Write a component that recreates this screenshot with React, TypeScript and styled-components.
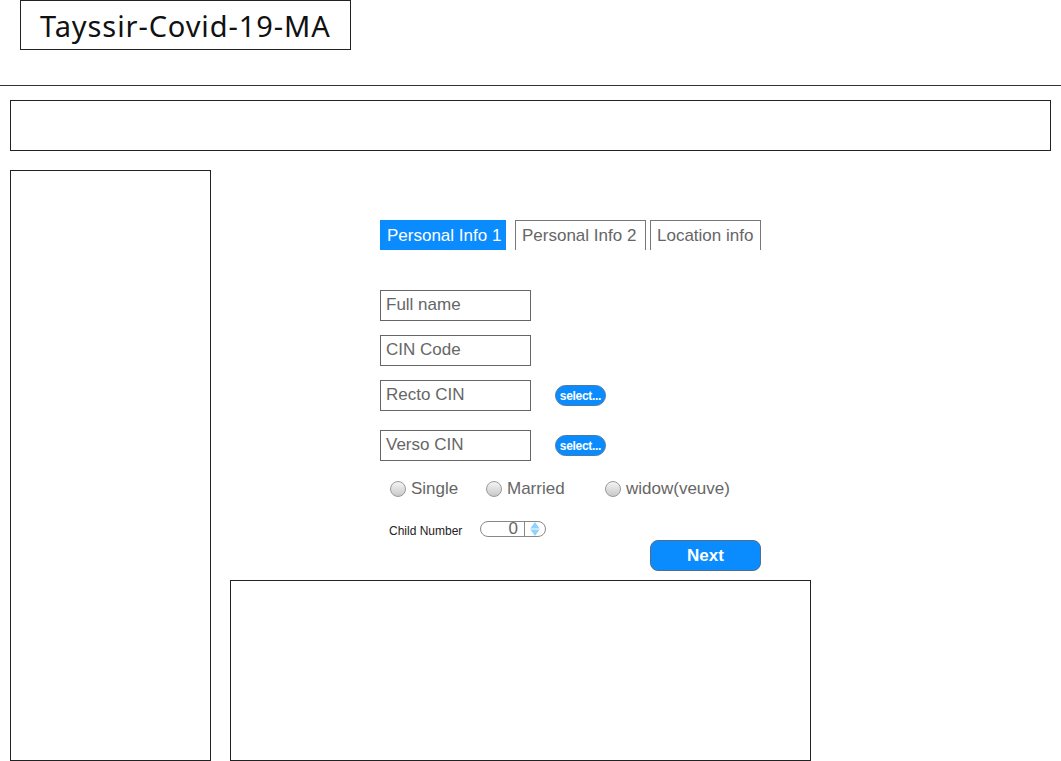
import React from "react";
import styled, { createGlobalStyle } from "styled-components";

const BLUE = "#0a8cff";

const GlobalStyle = createGlobalStyle`
  html, body {
    margin: 0;
    padding: 0;
    background: #fff;
  }
  body {
    width: 1061px;
    height: 761px;
    overflow: hidden;
    font-family: "Liberation Sans", Arial, sans-serif;
  }
`;

const Page = styled.div`
  display: flex;
  flex-direction: column;
  width: 1061px;
  height: 761px;
`;

const TitleBox = styled.div`
  box-sizing: border-box;
  margin-left: 20px;
  width: 331px;
  height: 50px;
  border: 1px solid #222;
  display: flex;
  align-items: center;
  padding-left: 19px;
  font-family: "Noto Sans", "Open Sans", sans-serif;
  font-size: 29px;
  letter-spacing: 0.9px;
  color: #111;
`;

const Rule = styled.div`
  margin-top: 35px;
  height: 0;
  border-top: 1px solid #333;
`;

const HeaderBar = styled.div`
  box-sizing: border-box;
  margin: 14px 10px 0;
  height: 51px;
  border: 1px solid #222;
`;

const Body = styled.div`
  display: flex;
  margin-top: 19px;
`;

const Sidebar = styled.div`
  box-sizing: border-box;
  margin-left: 10px;
  width: 201px;
  height: 591px;
  border: 1px solid #222;
`;

const Main = styled.div`
  display: flex;
  flex-direction: column;
  padding: 50px 0 0 19px;
`;

const Form = styled.div`
  display: flex;
  flex-direction: column;
  margin-left: 150px;
  width: 381px;
`;

const Tabs = styled.div`
  display: flex;
  height: 30px;
`;

const Tab = styled.div<{ $active?: boolean; $gap: number; $width: number }>`
  box-sizing: border-box;
  margin-left: ${(p) => p.$gap}px;
  width: ${(p) => p.$width}px;
  height: 30px;
  padding: 1px 0 0 ${(p) => (p.$active ? 7 : 6)}px;
  display: flex;
  align-items: center;
  white-space: nowrap;
  font-size: 17px;
  color: ${(p) => (p.$active ? "#fff" : "#666")};
  background: ${(p) => (p.$active ? BLUE : "#fff")};
  border: ${(p) => (p.$active ? "none" : "1px solid #777")};
  border-bottom: none;
`;

const FieldRow = styled.div<{ $top: number }>`
  display: flex;
  align-items: center;
  margin-top: ${(p) => p.$top}px;
`;

const TextField = styled.div`
  box-sizing: border-box;
  width: 151px;
  height: 31px;
  border: 1px solid #666;
  padding: 0 0 2px 5px;
  display: flex;
  align-items: center;
  font-size: 17px;
  color: #666;
`;

const SelectButton = styled.div`
  box-sizing: border-box;
  margin-left: 24px;
  width: 51px;
  height: 21px;
  border-radius: 11px;
  background: ${BLUE};
  border: 1px solid #4f7aa6;
  display: flex;
  align-items: center;
  justify-content: center;
  font-size: 12px;
  font-weight: bold;
  color: #fff;
  letter-spacing: -0.3px;
`;

const RadioRow = styled.div`
  display: flex;
  align-items: center;
  margin-top: 18px;
  padding-left: 10px;
  height: 20px;
`;

const RadioItem = styled.div<{ $width: number }>`
  display: flex;
  align-items: center;
  width: ${(p) => p.$width}px;
  font-size: 17px;
  color: #666;
`;

const RadioDot = styled.span`
  box-sizing: border-box;
  width: 16px;
  height: 16px;
  margin-right: 5px;
  border-radius: 50%;
  border: 1px solid #9a9a9a;
  background: linear-gradient(#f4f4f4, #c9c9c9);
`;

const ChildRow = styled.div`
  display: flex;
  align-items: center;
  margin-top: 22px;
  padding-left: 9px;
  height: 16px;
`;

const ChildLabel = styled.div`
  width: 91px;
  font-size: 12px;
  color: #222;
  padding-top: 3px;
`;

const Spinner = styled.div`
  box-sizing: border-box;
  width: 66px;
  height: 16px;
  border: 1px solid #888;
  border-radius: 8px;
  display: flex;
  align-items: center;
`;

const SpinValue = styled.div`
  flex: 1;
  text-align: right;
  padding-right: 6px;
  font-size: 17px;
  line-height: 14px;
  color: #666;
`;

const SpinArrows = styled.div`
  box-sizing: border-box;
  width: 21px;
  height: 100%;
  border-left: 1px solid #888;
  display: flex;
  align-items: center;
  justify-content: center;
`;

const NextButton = styled.div`
  box-sizing: border-box;
  align-self: flex-end;
  margin-top: 3px;
  width: 111px;
  height: 31px;
  border-radius: 8px;
  background: ${BLUE};
  border: 1px solid #4f6f90;
  display: flex;
  align-items: center;
  justify-content: center;
  font-size: 17px;
  font-weight: bold;
  color: #fff;
`;

const BottomBox = styled.div`
  box-sizing: border-box;
  margin-top: 9px;
  width: 581px;
  height: 181px;
  border: 1px solid #222;
`;

const Diamond = () => (
  <svg width="12" height="14" viewBox="0 0 12 14">
    <path d="M6 0 L11 7 L6 14 L1 7 Z" fill="#8fd1ff" />
    <line x1="0" y1="7" x2="12" y2="7" stroke="#fff" strokeWidth="1" />
  </svg>
);

export default function App() {
  return (
    <>
      <GlobalStyle />
      <Page>
        <TitleBox>Tayssir-Covid-19-MA</TitleBox>
        <Rule />
        <HeaderBar />
        <Body>
          <Sidebar />
          <Main>
            <Form>
              <Tabs>
                <Tab $active $gap={0} $width={126}>Personal Info 1</Tab>
                <Tab $gap={9} $width={131}>Personal Info 2</Tab>
                <Tab $gap={4} $width={111}>Location info</Tab>
              </Tabs>
              <FieldRow $top={40}>
                <TextField>Full name</TextField>
              </FieldRow>
              <FieldRow $top={14}>
                <TextField>CIN Code</TextField>
              </FieldRow>
              <FieldRow $top={14}>
                <TextField>Recto CIN</TextField>
                <SelectButton>select...</SelectButton>
              </FieldRow>
              <FieldRow $top={19}>
                <TextField>Verso CIN</TextField>
                <SelectButton>select...</SelectButton>
              </FieldRow>
              <RadioRow>
                <RadioItem $width={96}>
                  <RadioDot />
                  Single
                </RadioItem>
                <RadioItem $width={119}>
                  <RadioDot />
                  Married
                </RadioItem>
                <RadioItem $width={140}>
                  <RadioDot />
                  widow(veuve)
                </RadioItem>
              </RadioRow>
              <ChildRow>
                <ChildLabel>Child Number</ChildLabel>
                <Spinner>
                  <SpinValue>0</SpinValue>
                  <SpinArrows>
                    <Diamond />
                  </SpinArrows>
                </Spinner>
              </ChildRow>
              <NextButton>Next</NextButton>
            </Form>
            <BottomBox />
          </Main>
        </Body>
      </Page>
    </>
  );
}
